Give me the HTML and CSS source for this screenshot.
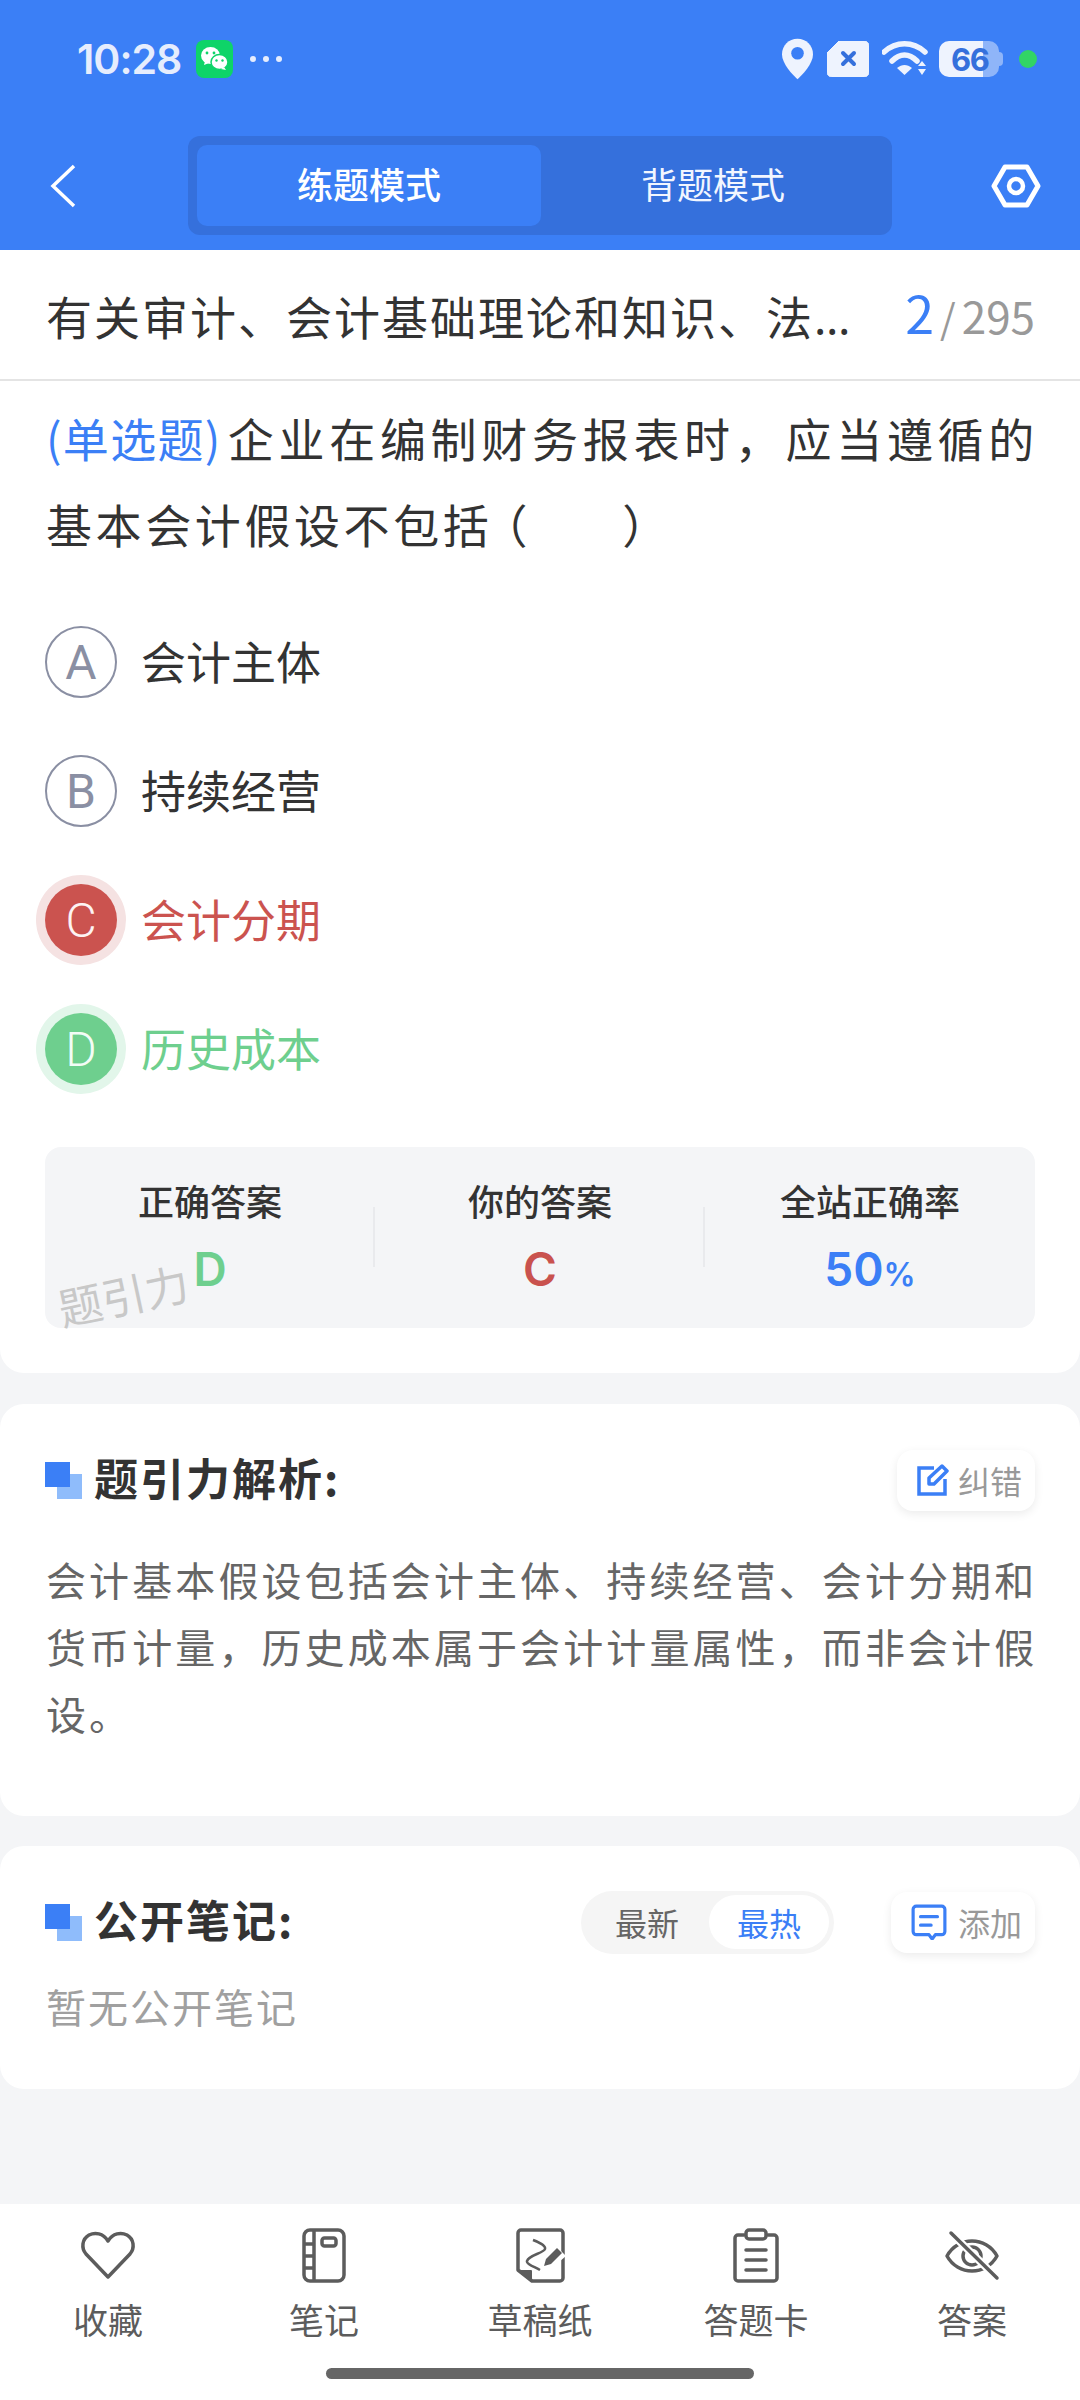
FILE: index.html
```html
<!DOCTYPE html>
<html lang="zh-CN">
<head>
    <meta charset="UTF-8">
    <meta name="viewport" content="width=device-width, initial-scale=1.0">
    <title>题引力</title>
    <link rel="stylesheet" href="styles.css">
</head>
<body>

    <header class="top">
        <div class="status">
            <span class="clock">10:28</span>
            <svg class="wechat" viewBox="0 0 37 38">
                <rect width="37" height="38" rx="8" fill="#0ed468"/>
                <ellipse cx="14.5" cy="15.5" rx="9.5" ry="8.5" fill="#fff"/>
                <path d="M9 21l-1 4 5-2z" fill="#fff"/>
                <ellipse cx="23.5" cy="22" rx="8.5" ry="7.5" fill="#fff" stroke="#0ed468" stroke-width="1.5"/>
                <path d="M28 27l2 3-5-1z" fill="#fff"/>
                <circle cx="11" cy="13" r="1.4" fill="#0ed468"/>
                <circle cx="18" cy="13" r="1.4" fill="#0ed468"/>
                <circle cx="20.5" cy="20.5" r="1.2" fill="#0ed468"/>
                <circle cx="26.5" cy="20.5" r="1.2" fill="#0ed468"/>
            </svg>
            <span class="dots"><i></i><i></i><i></i></span>
            <span class="spacer"></span>
            <svg class="st-pin" viewBox="0 0 32 42">
                <path d="M16 0C7 0 0 7 0 16c0 10 11 21 16 26 5-5 16-16 16-26C32 7 25 0 16 0z" fill="#eef3fe"/>
                <circle cx="16" cy="15" r="6.5" fill="#3b7ff6"/>
            </svg>
            <svg class="st-sim" viewBox="0 0 42 36">
                <path d="M12 0h25a5 5 0 0 1 5 5v26a5 5 0 0 1-5 5H5a5 5 0 0 1-5-5V12z" fill="#eef3fe" stroke="#eef3fe" stroke-linejoin="round"/>
                <path d="M16 12l11 11M27 12L16 23" stroke="#3570dc" stroke-width="4" stroke-linecap="round"/>
            </svg>
            <svg class="st-wifi" viewBox="0 0 46 36">
                <path d="M2 11C14 0 31 0 43 11" fill="none" stroke="#eef3fe" stroke-width="5.5" stroke-linecap="round"/>
                <path d="M10 20C18 12 27 12 35 20" fill="none" stroke="#eef3fe" stroke-width="5.5" stroke-linecap="round"/>
                <path d="M15 27c5-4 10-4 15 0l-7.500 7z" fill="#eef3fe"/>
                <path d="M36 25l4-5 4 5zM36 28l4 6 4-6z" fill="#eef3fe"/>
            </svg>
            <span class="battery"><span class="battery-num">66</span></span>
            <span class="live-dot"></span>
        </div>

        <div class="nav">
            <svg class="back" viewBox="0 0 26 44">
                <path d="M24 2L3 22l21 20" fill="none" stroke="#fff" stroke-width="3.500"/>
            </svg>
            <div class="mode-tabs">
                <div class="mode-tab active">练题模式</div>
                <div class="mode-tab">背题模式</div>
            </div>
            <svg class="gear" viewBox="0 0 50 44">
                <path d="M14 3h22l11 19-11 19H14L3 22z" fill="none" stroke="#fff" stroke-width="5" stroke-linejoin="round"/>
                <circle cx="25" cy="22" r="7" fill="none" stroke="#fff" stroke-width="4.500"/>
            </svg>
        </div>
    </header>

    <section class="card main-card">
        <div class="title-row">
            <div class="title-text">有关审计、会计基础理论和知识、法<span class="title-more">…</span></div>
            <div class="counter"><span class="cur">2</span><span class="slash">/</span><span class="total">295</span></div>
        </div>

        <div class="question">
            <div class="q-line first"><span class="q-type">(单选题)</span><span>企业在编制财务报表时，应当遵循的</span></div>
            <div class="q-line"><span>基本会计假设不包括</span><span class="q-blank">（　&nbsp;&nbsp;&nbsp;）</span></div>
        </div>

        <div class="options">
            <div class="option"><span class="letter">A</span><span class="option-text">会计主体</span></div>
            <div class="option"><span class="letter">B</span><span class="option-text">持续经营</span></div>
            <div class="option wrong"><span class="letter">C</span><span class="option-text">会计分期</span></div>
            <div class="option right"><span class="letter">D</span><span class="option-text">历史成本</span></div>
        </div>

        <div class="result">
            <div class="result-col">
                <div class="result-label">正确答案</div>
                <div class="result-value green">D</div>
            </div>
            <div class="result-col">
                <div class="result-label">你的答案</div>
                <div class="result-value red">C</div>
            </div>
            <div class="result-col">
                <div class="result-label">全站正确率</div>
                <div class="result-value blue">50<small>%</small></div>
            </div>
            <div class="watermark">题引力</div>
        </div>
    </section>

    <section class="card analysis">
        <div class="card-head">
            <svg class="mark" viewBox="0 0 37 37">
                <rect x="12" y="12" width="25" height="25" fill="#8fbcfb"/>
                <rect width="25" height="25" fill="#3b7ff6"/>
            </svg>
            <h3>题引力解析:</h3>
            <span class="spacer"></span>
            <div class="small-btn">
                <svg viewBox="0 0 32 32">
                    <path d="M17 4H2v26h26V15" fill="none" stroke="#3b7ff6" stroke-width="3.500"/>
                    <path d="M12 20v-6L25 2l5 5-13 13z" fill="none" stroke="#3b7ff6" stroke-width="3.500" stroke-linejoin="round"/>
                </svg>
                <span>纠错</span>
            </div>
        </div>
        <p class="analysis-text">会计基本假设包括会计主体、持续经营、会计分期和货币计量，历史成本属于会计计量属性，而非会计假设。</p>
    </section>

    <section class="card notes">
        <div class="card-head">
            <svg class="mark" viewBox="0 0 37 37">
                <rect x="12" y="12" width="25" height="25" fill="#8fbcfb"/>
                <rect width="25" height="25" fill="#3b7ff6"/>
            </svg>
            <h3>公开笔记:</h3>
            <span class="spacer"></span>
            <div class="sort">
                <span>最新</span>
                <span class="active">最热</span>
            </div>
            <div class="small-btn add-btn">
                <svg viewBox="0 0 34 34">
                    <path d="M5 2h24a3 3 0 0 1 3 3v21a3 3 0 0 1-3 3h-6l-3 4-3-4H5a3 3 0 0 1-3-3V5a3 3 0 0 1 3-3z" fill="none" stroke="#3b7ff6" stroke-width="3" stroke-linejoin="round"/>
                    <path d="M9 12h16M9 20h10" stroke="#3b7ff6" stroke-width="3" stroke-linecap="round"/>
                </svg>
                <span>添加</span>
            </div>
        </div>
        <p class="no-notes">暂无公开笔记</p>
    </section>

    <footer class="bottom">
        <div class="tools">
            <div class="tool">
                <svg viewBox="0 0 56 56">
                    <path d="M28 49L6 26C1 20 2 11 9 7c6-3 14-2 19 6 5-8 13-9 19-6 7 4 8 13 3 19z" fill="none" stroke="#5c5c5c" stroke-width="3.500" stroke-linejoin="round"/>
                </svg>
                <span>收藏</span>
            </div>
            <div class="tool">
                <svg viewBox="0 0 56 56">
                    <rect x="8" y="2" width="40" height="51" rx="6" fill="none" stroke="#5c5c5c" stroke-width="3.500"/>
                    <path d="M18 2v51M8 16h10M8 28h10M8 40h10" fill="none" stroke="#5c5c5c" stroke-width="3.500"/>
                    <rect x="26" y="10" width="14" height="8" rx="2.500" fill="none" stroke="#5c5c5c" stroke-width="3.500"/>
                </svg>
                <span>笔记</span>
            </div>
            <div class="tool">
                <svg viewBox="0 0 56 56">
                    <path d="M20 53H48a3 3 0 0 0 3-3V5a3 3 0 0 0-3-3H9a3 3 0 0 0-3 3v37z" fill="none" stroke="#5c5c5c" stroke-width="3.500" stroke-linejoin="round"/>
                    <path d="M7 43h12v9z" fill="#5c5c5c" stroke="#5c5c5c" stroke-width="2" stroke-linejoin="round"/>
                    <path d="M21 12c8 3 13 6 12 9-1 4-16 6-18 12-1 3 8 6 13 9" fill="none" stroke="#5c5c5c" stroke-width="2.500"/>
                    <path d="M40 14l14 14-14 12z" fill="#fff"/>
                    <path d="M32 38l2-7 11-11 5 5-11 11z" fill="#5c5c5c"/>
                </svg>
                <span>草稿纸</span>
            </div>
            <div class="tool">
                <svg viewBox="0 0 56 56">
                    <path d="M16 7H10a3 3 0 0 0-3 3v40a3 3 0 0 0 3 3h36a3 3 0 0 0 3-3V10a3 3 0 0 0-3-3h-6" fill="none" stroke="#5c5c5c" stroke-width="3.500" stroke-linecap="round"/>
                    <rect x="18" y="2" width="20" height="9" rx="3" fill="none" stroke="#5c5c5c" stroke-width="3.500"/>
                    <path d="M18 22h20M18 32h20M18 42h20" stroke="#5c5c5c" stroke-width="3.500" stroke-linecap="round"/>
                </svg>
                <span>答题卡</span>
            </div>
            <div class="tool">
                <svg viewBox="0 0 56 56">
                    <path d="M3 28C14 8 42 8 53 28 42 48 14 48 3 28z" fill="none" stroke="#5c5c5c" stroke-width="3.500" stroke-linejoin="round"/>
                    <circle cx="28" cy="28" r="9" fill="none" stroke="#5c5c5c" stroke-width="3.500"/>
                    <path d="M7 5l46 45" stroke="#fff" stroke-width="8"/>
                    <path d="M7 5l46 45" stroke="#5c5c5c" stroke-width="3.500" stroke-linecap="round"/>
                </svg>
                <span>答案</span>
            </div>
        </div>
        <div class="home-bar"></div>
    </footer>

</body>
</html>
```
FILE: styles.css
```css
* {
    box-sizing: border-box;
}

body {
    margin: 0;
    width: 1080px;
    height: 2400px;
    display: flex;
    flex-direction: column;
    background-color: #f4f5f7;
    font-family: "Noto Sans CJK SC", "Noto Sans", sans-serif;
    color: #333;
}

p, h3 {
    margin: 0;
}

.spacer {
    flex: 1;
}

/* top blue part */
.top {
    height: 250px;
    background-color: #3b7ff6;
}

.status {
    display: flex;
    align-items: center;
    height: 118px;
    padding: 0 43px 0 77px;
}

.clock {
    font-family: Inter, sans-serif;
    font-size: 41px;
    font-weight: 600;
    letter-spacing: -1px;
    color: #e6edfd;
}

.wechat {
    width: 37px;
    height: 38px;
    margin-left: 15px;
}

.dots {
    display: flex;
    gap: 7px;
    margin-left: 17px;
}

.dots i {
    width: 6px;
    height: 6px;
    border-radius: 50%;
    background-color: #e6edfd;
}

.st-pin {
    width: 31px;
    height: 42px;
}

.st-sim {
    width: 42px;
    height: 36px;
    margin-left: 14px;
}

.st-wifi {
    width: 46px;
    height: 36px;
    margin-left: 13px;
}

.battery {
    position: relative;
    display: flex;
    align-items: center;
    width: 60px;
    height: 36px;
    margin-left: 11px;
    margin-right: 4px;
    padding-left: 12px;
    border-radius: 10px;
    background: linear-gradient(to right, #eef3fe 0, #eef3fe 44px, #8fb5f9 44px);
}

.battery::after {
    content: "";
    position: absolute;
    right: -4px;
    top: 11px;
    width: 4px;
    height: 14px;
    border-radius: 0 4px 4px 0;
    background-color: #8fb5f9;
}

.battery-num {
    font-family: Inter, sans-serif;
    font-size: 31px;
    font-weight: 700;
    letter-spacing: -1.500px;
    color: #3570dc;
}

.live-dot {
    width: 18px;
    height: 18px;
    margin-left: 16px;
    border-radius: 50%;
    background-color: #32d465;
}

.nav {
    display: flex;
    align-items: center;
    height: 99px;
    margin-top: 18px;
    padding-left: 50px;
}

.back {
    width: 26px;
    height: 44px;
}

.mode-tabs {
    display: flex;
    width: 704px;
    height: 99px;
    margin-left: 112px;
    padding: 9px 7px 9px 9px;
    border-radius: 12px;
    background-color: #3570dc;
}

.mode-tab {
    flex: 1;
    display: flex;
    align-items: center;
    justify-content: center;
    padding-bottom: 6px;
    border-radius: 10px;
    font-size: 36px;
    color: #f2f6ff;
}

.mode-tab.active {
    background-color: #3b7ff6;
    font-weight: 500;
    color: #fff;
}

.gear {
    width: 50px;
    height: 44px;
    margin-left: 99px;
}

/* cards */
.card {
    background-color: #fff;
    border-radius: 24px;
}

.main-card {
    height: 1123px;
    border-radius: 0 0 24px 24px;
}

.title-row {
    display: flex;
    align-items: center;
    justify-content: space-between;
    height: 131px;
    padding: 0 45px 0 46px;
    border-bottom: 2px solid #e4e4e4;
}

.title-text {
    font-size: 46px;
    letter-spacing: 2px;
}

.title-more {
    font-family: "Noto Sans", sans-serif;
    letter-spacing: 0;
}

.counter {
    display: flex;
    align-items: baseline;
    margin-bottom: 6px;
    color: #999;
    font-size: 44px;
}

.cur {
    font-size: 52px;
    color: #3b7ff6;
}

.slash {
    margin: 0 6px;
    font-size: 40px;
}

.question {
    padding: 13px 41px 0 46px;
    font-size: 46px;
    line-height: 86px;
    letter-spacing: 3.600px;
}

.q-line.first {
    display: flex;
    justify-content: space-between;
    letter-spacing: 4.700px;
}

.q-type {
    letter-spacing: 1.300px;
    color: #3b7ff6;
}

.q-blank {
    margin-left: -11px;
}

.options {
    display: flex;
    flex-direction: column;
    gap: 57px;
    margin-top: 60px;
    padding-left: 45px;
}

.option {
    display: flex;
    align-items: center;
    gap: 24px;
    height: 72px;
    font-size: 45px;
}

.option-text {
    margin-bottom: 4px;
}

.letter {
    display: flex;
    align-items: center;
    justify-content: center;
    width: 72px;
    height: 72px;
    border: 2px solid #8a8fa3;
    border-radius: 50%;
    font-family: Roboto, sans-serif;
    font-size: 48px;
    color: #8a8fa3;
}

.option.wrong {
    color: #cb534f;
}

.option.wrong .letter {
    border: none;
    background-color: #cb534f;
    box-shadow: 0 0 0 9px #f5e2e2;
    font-weight: 300;
    color: #fdf3f3;
}

.option.right {
    color: #6ecf8e;
}

.option.right .letter {
    border: none;
    background-color: #6ecf8e;
    box-shadow: 0 0 0 9px #e2f6ea;
    font-weight: 300;
    color: #f3fcf6;
}

.result {
    position: relative;
    display: flex;
    height: 181px;
    margin: 62px 45px 0;
    border-radius: 16px;
    background-color: #f4f5f7;
}

.result-col {
    position: relative;
    flex: 1;
    display: flex;
    flex-direction: column;
    align-items: center;
    padding-top: 30px;
}

.result-col + .result-col::before {
    content: "";
    position: absolute;
    left: -2px;
    top: 60px;
    width: 2px;
    height: 60px;
    background-color: #e9eaed;
}

.result-label {
    font-size: 36px;
    line-height: 46px;
    font-weight: 500;
}

.result-value {
    margin-top: 20px;
    font-family: Inter, sans-serif;
    font-size: 46px;
    line-height: 52px;
    font-weight: 600;
}

.result-value small {
    font-size: 32px;
}

.green {
    color: #6ecf8e;
}

.red {
    color: #c9524e;
}

.blue {
    color: #3b7ff6;
}

.watermark {
    position: absolute;
    left: 12px;
    bottom: 8px;
    font-size: 44px;
    line-height: 52px;
    color: #c8c8c8;
    transform: rotate(-12deg);
}

.analysis {
    height: 412px;
    margin-top: 31px;
    padding: 46px 40px 0 46px;
}

.card-head {
    display: flex;
    align-items: center;
    height: 60px;
    margin-right: 5px;
}

.mark {
    width: 37px;
    height: 37px;
    margin-right: 12px;
    margin-left: -1px;
}

.card-head h3 {
    margin-bottom: 6px;
    font-size: 44px;
    font-weight: 700;
    letter-spacing: 2px;
}

.small-btn {
    display: flex;
    align-items: center;
    gap: 9px;
    height: 61px;
    padding: 0 13px 0 20px;
    border-radius: 16px;
    background-color: #fff;
    box-shadow: 0 3px 10px rgba(0, 0, 0, 0.08);
    font-size: 32px;
    color: #999;
}

.small-btn svg {
    width: 32px;
    height: 32px;
}

.add-btn {
    gap: 11px;
}

.add-btn svg {
    width: 36px;
    height: 36px;
}

.analysis-text {
    margin-top: 36px;
    font-size: 40px;
    line-height: 67px;
    letter-spacing: 3.100px;
    color: #666;
}

.notes {
    height: 243px;
    margin-top: 30px;
    padding: 46px 40px 0 46px;
}

.sort {
    display: flex;
    align-items: center;
    justify-content: space-between;
    width: 253px;
    height: 63px;
    margin-right: 57px;
    padding: 0 5px 0 34px;
    border-radius: 32px;
    background-color: #f5f5f5;
    font-size: 32px;
    color: #666;
}

.sort .active {
    display: flex;
    align-items: center;
    justify-content: center;
    width: 120px;
    height: 54px;
    border-radius: 27px;
    background-color: #fff;
    color: #3b7ff6;
}

.no-notes {
    margin-top: 24px;
    font-size: 40px;
    line-height: 60px;
    letter-spacing: 2px;
    color: #a0a0a0;
}

/* bottom bar */
.bottom {
    margin-top: auto;
    height: 196px;
    background-color: #fff;
}

.tools {
    display: flex;
    padding-top: 24px;
}

.tool {
    flex: 1;
    display: flex;
    flex-direction: column;
    align-items: center;
    font-size: 35px;
    color: #5c5c5c;
}

.tool svg {
    width: 56px;
    height: 56px;
}

.tool span {
    margin-top: 13px;
    line-height: 44px;
}

.home-bar {
    width: 428px;
    height: 11px;
    margin: 27px auto 0;
    border-radius: 6px;
    background-color: #666;
}
```
